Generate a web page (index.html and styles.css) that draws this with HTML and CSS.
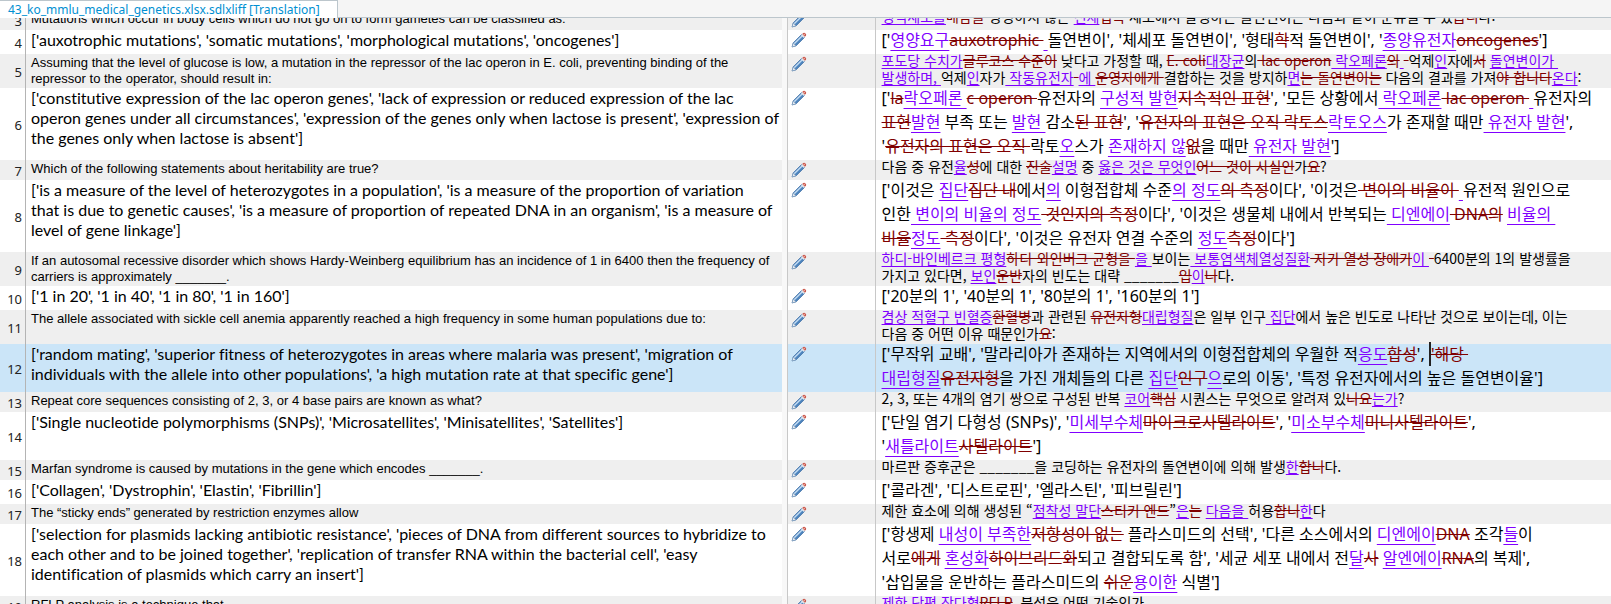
FILE: index.html
```html
<!DOCTYPE html>
<html lang="ko">
<head>
<meta charset="utf-8">
<title>43_ko_mmlu_medical_genetics.xlsx.sdlxliff [Translation]</title>
<link rel="stylesheet" href="styles.css">
</head>
<body>
<header class="tabs"><button class="tab" type="button">43_ko_mmlu_medical_genetics.xlsx.sdlxliff [Translation]</button></header>
<svg class="defs" aria-hidden="true">
<symbol id="pencil" viewBox="0 0 16 16">
<path d="M1.2 14.8L2.3 10.8L10.6 2.5L13.5 5.4L5.2 13.7Z" fill="#4f86bf" stroke="#3f6fa5" stroke-width=".8"/>
<path d="M3.2 11.8L11.3 3.7" stroke="#c4dcf3" stroke-width="1.4"/>
<path d="M1 15L2.2 11L5 13.8Z" fill="#e9eef3" stroke="#6e90b3" stroke-width=".6"/>
<path d="M10 3.2L11.3 1.9L14.1 4.7L12.8 6Z" fill="#dfe5ea"/>
<path d="M11.2 2.1L12.3 1Q13.4.4 14.5 1.5Q15.6 2.6 15 3.7L13.9 4.8Z" fill="#c9574b"/>
<circle cx="13.2" cy="2.6" r=".8" fill="#efb0a6"/>
</symbol>
</svg>
<main class="editor">
<table class="segments">
<colgroup><col class="c-num"><col class="c-source"><col class="c-gap"><col class="c-status"><col class="c-target"></colgroup>
<tbody>
<tr class="small"><th scope="row">3</th><td class="source">Mutations which occur in body cells which do not go on to form gametes can be classified as:</td><td class="gap"></td><td class="status"><svg class="pencil"><use href="#pencil"/></svg></td><td class="target"><div class="text"><ins>생식세포를</ins><del>배암을</del> 형성하지 않는 <ins>신체</ins><del>접촉</del> 세포에서 발생하는 돌연변이는 다음과 같이 분류될 수 있<del>습니</del>다:</div></td></tr>
<tr class="big"><th scope="row">4</th><td class="source">['auxotrophic mutations', 'somatic mutations', 'morphological mutations', 'oncogenes']</td><td class="gap"></td><td class="status"><svg class="pencil"><use href="#pencil"/></svg></td><td class="target"><div class="text">['<ins>영양요구</ins><del>auxotrophic </del><ins> </ins>돌연변이', '체세포 돌연변이', '형태<del>학</del>적 돌연변이', '<ins>종양유전자</ins><del>oncogenes</del>']</div></td></tr>
<tr class="small"><th scope="row">5</th><td class="source">Assuming that the level of glucose is low, a mutation in the repressor of the lac operon in E. coli, preventing binding of the<br>repressor to the operator, should result in:</td><td class="gap"></td><td class="status"><svg class="pencil"><use href="#pencil"/></svg></td><td class="target"><div class="text"><ins>포도당 수치가</ins><del>글루코스 수준이</del> 낮다고 가정할 때, <del>E. coli</del><ins>대장균</ins>의<del> lac operon</del><ins> 락오페론</ins><del>의</del><ins> </ins><del>-</del>억제<ins>인</ins>자에<del>서</del> <ins>돌연변이가 </ins><br><ins>발생하며, </ins>억제<ins>인</ins>자가<ins> 작동유전자</ins><del>-</del><ins>에 </ins><del>운영자에게 </del>결합하는 것을 방지하<ins>면</ins><del>는 돌연변이는</del> 다음의 결과를 가져<del>야 합니다</del><ins>온다</ins>:</div></td></tr>
<tr class="big"><th scope="row">6</th><td class="source">['constitutive expression of the lac operon genes', 'lack of expression or reduced expression of the lac<br>operon genes under all circumstances', 'expression of the genes only when lactose is present', 'expression of<br>the genes only when lactose is absent']</td><td class="gap"></td><td class="status"><svg class="pencil"><use href="#pencil"/></svg></td><td class="target"><div class="text">['<del>la</del><ins>락오페론 </ins><del>c operon </del>유전자의 <ins>구성적 발현</ins><del>지속적인 표현</del>', '모든 상황에서<ins> 락오페론</ins><del> lac operon </del><ins> </ins>유전자의<br><del>표현</del><ins>발현</ins> 부족 또는 <ins>발현 </ins>감소<del>된 표현</del>', '<del>유전자의 표현은 오직 락토스</del><ins>락토오스</ins>가 존재할 때만<ins> 유전자 발현</ins>',<br>'<del>유전자의 표현은 오직 </del>락토<ins>오</ins>스가 <ins>존재하지 않</ins><del>없</del>을 때만<ins> 유전자 발현</ins>']</div></td></tr>
<tr class="small"><th scope="row">7</th><td class="source">Which of the following statements about heritability are true?</td><td class="gap"></td><td class="status"><svg class="pencil"><use href="#pencil"/></svg></td><td class="target"><div class="text">다음 중 유전<ins>율</ins><del>성</del>에 대한 <del>진술</del><ins>설명</ins> 중 <ins>옳은 것은 무엇인</ins><del>어느 것이 사실인</del>가<del>요</del>?</div></td></tr>
<tr class="big"><th scope="row">8</th><td class="source">['is a measure of the level of heterozygotes in a population', 'is a measure of the proportion of variation<br>that is due to genetic causes', 'is a measure of proportion of repeated DNA in an organism', 'is a measure of<br>level of gene linkage']</td><td class="gap"></td><td class="status"><svg class="pencil"><use href="#pencil"/></svg></td><td class="target"><div class="text">['이것은 <ins>집단</ins><del>집단 내</del>에서<ins>의</ins> 이형접합체 수준<ins>의 정도</ins><del>의 측정</del>이다', '이것은<del> 변이의 비율이 </del><ins> </ins>유전적 원인으로<br>인한<ins> 변이의 비율의 정도</ins><del> 것인지의 측정</del>이다', '이것은 생물체 내에서 반복되는<ins> 디엔에이</ins><del> DNA의</del> <ins>비율의 </ins><br><del>비율</del><ins>정도</ins><del> 측정</del>이다', '이것은 유전자 연결 수준의 <ins>정도</ins><del>측정</del>이다']</div></td></tr>
<tr class="small"><th scope="row">9</th><td class="source">If an autosomal recessive disorder which shows Hardy-Weinberg equilibrium has an incidence of 1 in 6400 then the frequency of<br>carriers is approximately _______.</td><td class="gap"></td><td class="status"><svg class="pencil"><use href="#pencil"/></svg></td><td class="target"><div class="text"><ins>하디-바인베르크 평형</ins><del>하디-와인버그 균형을 </del><ins>을 </ins>보이는<ins> 보통염색체열성질환</ins><del> 자가 열성 장애가</del><ins>이 </ins><del>-</del>6400분의 1의 발생률을<br>가지고 있다면, <ins>보인</ins><del>운반</del>자의 빈도는 대략 _______<del>입</del><ins>이</ins><del>니</del>다.</div></td></tr>
<tr class="big"><th scope="row">10</th><td class="source">['1 in 20', '1 in 40', '1 in 80', '1 in 160']</td><td class="gap"></td><td class="status"><svg class="pencil"><use href="#pencil"/></svg></td><td class="target"><div class="text">['20분의 1', '40분의 1', '80분의 1', '160분의 1']</div></td></tr>
<tr class="small"><th scope="row">11</th><td class="source">The allele associated with sickle cell anemia apparently reached a high frequency in some human populations due to:</td><td class="gap"></td><td class="status"><svg class="pencil"><use href="#pencil"/></svg></td><td class="target"><div class="text"><ins>겸상 적혈구 빈혈증</ins><del>환혈병</del>과 관련된 <del>유전자형</del><ins>대립형질</ins>은 일부 인구<ins> 집단</ins>에서 높은 빈도로 나타난 것으로 보이는데, 이는<br>다음 중 어떤 이유 때문인가<del>요</del>:</div></td></tr>
<tr class="big active"><th scope="row">12</th><td class="source">['random mating', 'superior fitness of heterozygotes in areas where malaria was present', 'migration of<br>individuals with the allele into other populations', 'a high mutation rate at that specific gene']</td><td class="gap"></td><td class="status"><svg class="pencil"><use href="#pencil"/></svg></td><td class="target"><div class="text">['무작위 교배', '말라리아가 존재하는 지역에서의 이형접합체의 우월한 적<ins>응도</ins><del>합성</del>', <span class="caret"></span><del>'해당 </del><br><ins>대립형질</ins><del>유전자형</del>을 가진 개체들의 다른 <ins>집단</ins><del>인구</del><ins>으</ins>로의 이동', '특정 유전자에서의 높은 돌연변이율']</div></td></tr>
<tr class="small"><th scope="row">13</th><td class="source">Repeat core sequences consisting of 2, 3, or 4 base pairs are known as what?</td><td class="gap"></td><td class="status"><svg class="pencil"><use href="#pencil"/></svg></td><td class="target"><div class="text">2, 3, 또는 4개의 염기 쌍으로 구성된 반복 <ins>코어</ins><del>핵심</del> 시퀀스는 무엇으로 알려져 있<del>나요</del><ins>는가</ins>?</div></td></tr>
<tr class="big"><th scope="row">14</th><td class="source">['Single nucleotide polymorphisms (SNPs)', 'Microsatellites', 'Minisatellites', 'Satellites']</td><td class="gap"></td><td class="status"><svg class="pencil"><use href="#pencil"/></svg></td><td class="target"><div class="text">['단일 염기 다형성 (SNPs)', '<ins>미세부수체</ins><del>마이크로사텔라이트</del>', '<ins>미소부수체</ins><del>미니사텔라이트</del>',<br>'<ins>새틀라이트</ins><del>사텔라이트</del>']</div></td></tr>
<tr class="small"><th scope="row">15</th><td class="source">Marfan syndrome is caused by mutations in the gene which encodes _______.</td><td class="gap"></td><td class="status"><svg class="pencil"><use href="#pencil"/></svg></td><td class="target"><div class="text">마르판 증후군은 _______을 코딩하는 유전자의 돌연변이에 의해 발생<ins>한</ins><del>합니</del>다.</div></td></tr>
<tr class="big"><th scope="row">16</th><td class="source">['Collagen', 'Dystrophin', 'Elastin', 'Fibrillin']</td><td class="gap"></td><td class="status"><svg class="pencil"><use href="#pencil"/></svg></td><td class="target"><div class="text">['콜라겐', '디스트로핀', '엘라스틴', '피브릴린']</div></td></tr>
<tr class="small"><th scope="row">17</th><td class="source">The “sticky ends” generated by restriction enzymes allow</td><td class="gap"></td><td class="status"><svg class="pencil"><use href="#pencil"/></svg></td><td class="target"><div class="text">제한 효소에 의해 생성된 “<ins>점착성 말단</ins><del>스티키 엔드</del>”<ins>은</ins><del>는</del> <ins>다음을 </ins>허용<del>합니</del><ins>한</ins>다</div></td></tr>
<tr class="big"><th scope="row">18</th><td class="source">['selection for plasmids lacking antibiotic resistance', 'pieces of DNA from different sources to hybridize to<br>each other and to be joined together', 'replication of transfer RNA within the bacterial cell', 'easy<br>identification of plasmids which carry an insert']</td><td class="gap"></td><td class="status"><svg class="pencil"><use href="#pencil"/></svg></td><td class="target"><div class="text">['항생제 <ins>내성이 부족한</ins><del>저항성이 없는</del> 플라스미드의 선택', '다른 소스에서의 <ins>디엔에이</ins><del>DNA</del> 조각<ins>들</ins>이<br>서로<del>에게</del> <ins>혼성화</ins><del>하이브리드화</del>되고 결합되도록 함', '세균 세포 내에서 전<ins>달</ins><del>사</del> <ins>알엔에이</ins><del>RNA</del>의 복제',<br>'삽입물을 운반하는 플라스미드의 <del>쉬운</del><ins>용이한</ins> 식별']</div></td></tr>
<tr class="small"><th scope="row">19</th><td class="source">RFLP analysis is a technique that</td><td class="gap"></td><td class="status"><svg class="pencil"><use href="#pencil"/></svg></td><td class="target"><div class="text"><ins>제한 단편 장다형</ins><del>RFLP</del>&nbsp; 분석은 어떤 기술인가</div></td></tr>
</tbody>
</table>
</main>
</body>
</html>
```
FILE: styles.css
```css
* { box-sizing: border-box; }
body {
  margin: 0;
  height: 100vh;
  display: flex;
  flex-direction: column;
  overflow: hidden;
  background: #fff;
  color: #000;
  font-family: "Noto Sans", "Noto Sans CJK KR", sans-serif;
}
.defs { display: none; }
.tabs {
  flex: none;
  height: 18px;
  background: #f5f5f5;
  border-bottom: 1px solid #bcc6cc;
}
.tab {
  height: 18px;
  padding: 0 17px 0 8px;
  border: 1px solid #bcc6cc;
  border-width: 1px 1px 0 0;
  background: #fff;
  color: #0090d2;
  font: 12px/16px "Noto Sans", sans-serif;
  display: block;
}
.editor {
  flex: 1;
  min-height: 0;
  overflow: hidden;
  display: flex;
  flex-direction: column;
}
.segments {
  width: 100%;
  flex: none;
  margin-top: -8px;
  border-collapse: separate;
  border-spacing: 0;
  table-layout: fixed;
}
.c-num { width: 26px; }
.c-source { width: 46.9%; }
.c-gap { width: 5px; }
.c-status { width: 89px; }
th, td {
  padding: 0;
  vertical-align: top;
  text-align: left;
  white-space: nowrap;
}
.small { height: 20px; background: #efefef; }
.big { height: 24px; }
.active { background: #cbe5f8; }
th {
  vertical-align: middle;
  text-align: right;
  padding: 2px 3px 0 0;
  border-right: 1px solid #b4b4b4;
  color: #222;
  font-size: 13px;
  font-weight: 400;
  line-height: 16px;
}
.source { padding-left: 5px; }
.small .source { padding-top: 1px; font: 13px/16px "Liberation Sans", sans-serif; }
.big .source { font: 16px/20px Lato, sans-serif; font-variant-ligatures: none; }
.gap { background: #f8f8f8; }
.status { border: 1px solid #c8c8c8; border-width: 0 1px; padding: 2px 0 0 3px; }
.pencil { display: block; width: 16px; height: 16px; }
.target { padding-left: 6px; white-space: pre; }
.text { margin-top: -2px; padding-bottom: 2px; }
.small .target { font: 14px/17px "Noto Sans CJK KR", sans-serif; }
.big .target { font-size: 16px; line-height: 24px; }
ins { color: #8000ff; text-decoration: underline; text-underline-position: under; }
del { color: #800000; text-decoration: line-through; }
.caret {
  display: inline-block;
  width: 2px;
  height: 24px;
  background: #222;
  vertical-align: top;
}
```
